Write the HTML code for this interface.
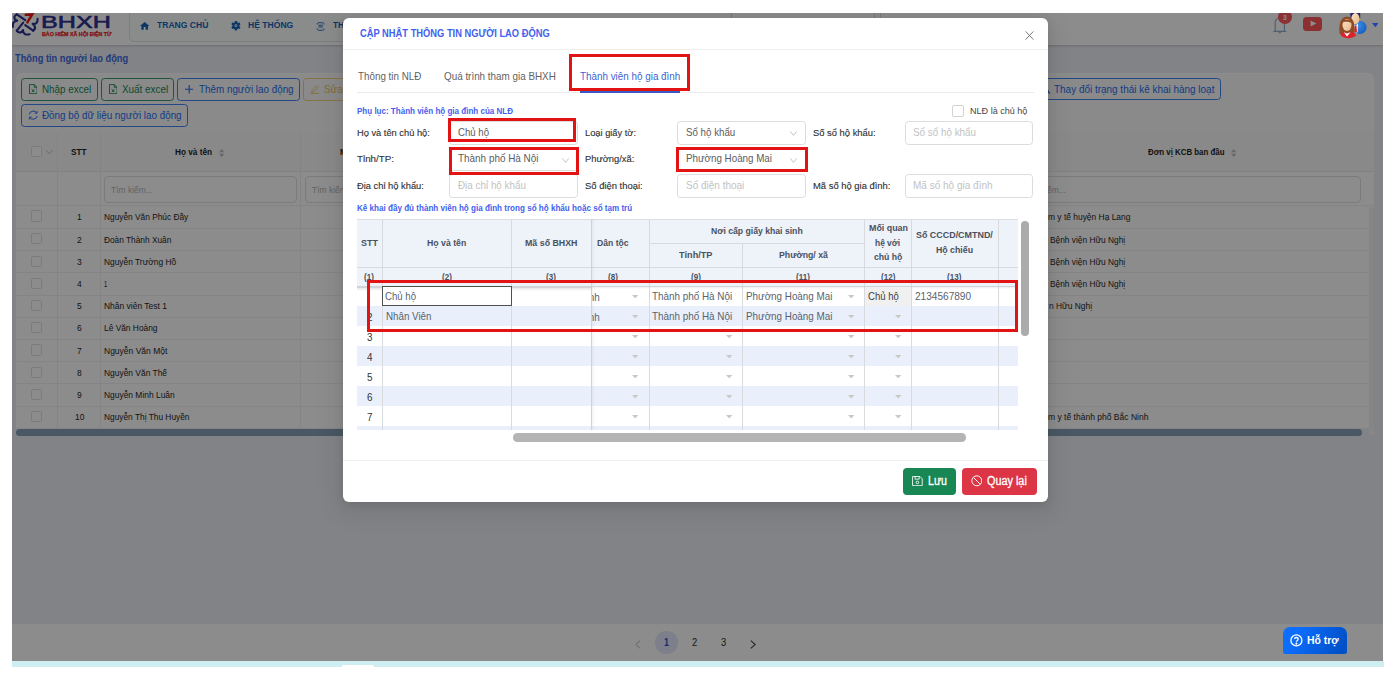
<!DOCTYPE html>
<html lang="vi"><head><meta charset="utf-8"><title>Thông tin người lao động</title>
<style>
html,body{margin:0;padding:0}
body{width:1397px;height:682px;background:#fff;position:relative;overflow:hidden;font-family:"Liberation Sans",Arial,sans-serif}
#shot{position:absolute;left:12px;top:13px;width:1371px;height:648px;overflow:hidden;background:#eceef5}
.lay{position:absolute;left:0;top:0;width:1397px;height:682px}
#bg,#fg{left:-12px;top:-13px}
#fgclip{position:absolute;left:12px;top:13px;width:1371px;height:648px;overflow:hidden}
.lay>div,.lay>svg{position:absolute;box-sizing:border-box}
#mask{position:absolute;left:0;top:0;right:0;bottom:0;background:rgba(0,0,0,.45)}
#cyan{position:absolute;left:12px;top:661px;width:1372px;height:6px;background:#cfeef2}
.t{position:absolute;white-space:nowrap;line-height:1;transform-origin:0 0}
.clip{overflow:hidden}
.clip>.t{position:absolute}
.t i.p{display:inline-block;width:0;height:0}
#notch{position:absolute;left:330px;top:4.4px;width:32.4px;height:1.6px;background:#fff;border-radius:1.5px 1.5px 0 0}

</style></head>
<body>
<div id="shot"><div class="lay" id="bg">
<div style="left:12.00px;top:13.00px;width:1371.00px;height:32.00px;background:#fff;box-shadow:0 1px 2px rgba(0,0,0,.18)"></div>
<div style="left:129.00px;top:11.00px;width:751.90px;height:31.20px;border:1px solid #dfe3e8;border-radius:0 0 0 5px;background:#fcfdfe"></div>
<div style="left:731.00px;top:13.00px;width:144.00px;height:23.00px;border:1px solid #d9d9d9;border-top:none;background:#fff"></div>
<svg style="left:11px;top:12px" width="29" height="25" viewBox="11 12 29 25" fill="none" stroke-linecap="round" stroke-linejoin="round">
<g stroke="#2e3192" stroke-width="2.1">
<path d="M16.8 14.4 L25.2 20.2"/>
<path d="M25.2 25.2 L33.2 30.6"/>
<path d="M23.2 22.6 L16.8 30.6"/>
<path d="M16.8 14.4 Q13.2 16.4 14.8 19 Q15.6 20.4 17.2 20.6 Q12.2 21 12.9 26.8"/>
<path d="M16.8 30.6 Q18.6 33.4 21.2 32 Q22.6 31.2 23 30 Q23 35.6 29.6 34.3"/>
<path d="M33.2 30.6 Q36 28.6 34.6 26 Q33.8 24.4 32.6 23.8 Q37.8 24.6 37.6 18.8"/>
</g>
<g stroke="#f01818" stroke-width="2.5" stroke-linejoin="miter"><path d="M27.4 22.4 L32.2 14.4 L25.8 14.8"/></g>
</svg>
<svg style="left:140.4px;top:22.2px" width="9.4" height="7.8" viewBox="0 0 24 20"><path fill="#1565b8" d="M12 0 L0 10 H3.5 V20 H9.5 V13 H14.5 V20 H20.5 V10 H24 Z"/></svg>
<svg style="left:230.8px;top:21.2px" width="9.8" height="9.4" viewBox="-12 -12 24 24"><g fill="#1565b8"><circle r="9"/>
<rect x="-3" y="-12" width="6" height="24" rx="1.2"/><rect x="-3" y="-12" width="6" height="24" rx="1.2" transform="rotate(60)"/><rect x="-3" y="-12" width="6" height="24" rx="1.2" transform="rotate(120)"/></g><circle r="3.6" fill="#fff"/><circle r="1.5" fill="#1565b8"/></svg>
<svg style="left:316px;top:21.5px" width="9.2" height="9" viewBox="0 0 18 18" fill="none" stroke="#1565b8" stroke-width="1.8"><path d="M2 5 C2 2.5 3.5 1.5 5.5 1.5 H12.5 C14.5 1.5 16 2.5 16 5"/><path d="M4.5 6.5 H13.5 M4.5 10 H13.5"/><path d="M2 13 C2 15.5 3.5 16.5 5.5 16.5 H12.5 C14.5 16.5 16 15.5 16 13"/></svg>
<svg style="left:1272px;top:14px" width="18" height="22" viewBox="1272 14 18 22" fill="none"><path d="M1275.2 31.2 V23.5 C1275.2 20 1277.2 18 1279.8 18 C1282.4 18 1284.4 20 1284.4 23.5 V31.2 M1273.4 31.4 H1286.2" stroke="#8fb0ca" stroke-width="1.2"/><path d="M1278 32.2 L1279.8 33.8 L1281.6 32.2 Z" fill="#8fb0ca"/></svg>
<div style="left:1277.60px;top:9.80px;width:14.20px;height:14.20px;background:#ff5a60;border-radius:50%"></div>
<div style="left:1303.00px;top:17.00px;width:19.40px;height:13.60px;background:#ff5658;border-radius:3.5px"></div>
<svg style="left:1309.6px;top:20.4px" width="7" height="7" viewBox="0 0 7 7"><path d="M0.6 0.4 L6.4 3.5 L0.6 6.6 Z" fill="#fff"/></svg>
<div style="left:16.00px;top:73.00px;width:1358.40px;height:60.00px;background:#fbfbfb;border-radius:6px 6px 0 0;border:1px solid #fff;border-bottom:none"></div>
<div style="left:21.20px;top:78.20px;width:76.50px;height:22.40px;border:1px solid #198754;border-radius:3.5px;opacity:.85;"></div>
<div style="left:101.00px;top:78.20px;width:73.00px;height:22.40px;border:1px solid #198754;border-radius:3.5px;opacity:.85;"></div>
<div style="left:177.30px;top:78.20px;width:122.70px;height:22.40px;border:1px solid #1d6ff0;border-radius:3.5px;opacity:.85;"></div>
<div style="left:303.20px;top:78.20px;width:48.80px;height:22.40px;border:1px solid #f0cc66;border-radius:3.5px;opacity:.85;"></div>
<div style="left:21.20px;top:104.30px;width:167.00px;height:22.50px;border:1px solid #1d6ff0;border-radius:3.5px;opacity:.85;"></div>
<div style="left:1036.00px;top:78.40px;width:185.30px;height:22.10px;border:1px solid #1d6ff0;border-radius:3.5px;opacity:.85;"></div>
<svg style="left:28.5px;top:84.1px" width="8.6" height="10.2" viewBox="0 0 17 20" fill="none" stroke="#198754" stroke-width="1.7"><path d="M1 1 H10.5 L16 6.5 V19 H1 Z"/><path d="M10.5 1 V6.5 H16"/><path d="M5.6 10.4 L10.6 16 M10.6 10.4 L5.6 16" stroke-width="1.9"/></svg>
<svg style="left:108.7px;top:84.1px" width="8.6" height="10.2" viewBox="0 0 17 20" fill="none" stroke="#198754" stroke-width="1.7"><path d="M1 1 H10.5 L16 6.5 V19 H1 Z"/><path d="M10.5 1 V6.5 H16"/><path d="M5.6 10.4 L10.6 16 M10.6 10.4 L5.6 16" stroke-width="1.9"/></svg>
<svg style="left:184.8px;top:85.2px" width="8.4" height="8.4" viewBox="0 0 8.4 8.4" stroke="#1d6ff0" stroke-width="1.1"><path d="M4.2 0 V8.4 M0 4.2 H8.4"/></svg>
<svg style="left:309.6px;top:84.4px" width="9.8" height="10" viewBox="0 0 20 20" fill="none" stroke="#ecc050" stroke-width="1.6"><path d="M4 13.5 L13.5 3 L17 6.5 L7.5 16 L3.4 16.6 Z"/><path d="M1 19 H19"/></svg>
<svg style="left:27.6px;top:110.4px" width="10.4" height="10.4" viewBox="0 0 20 20" fill="none" stroke="#1d6ff0" stroke-width="1.9"><path d="M2.4 8.2 A8 8 0 0 1 17 6"/><path d="M17.6 11.8 A8 8 0 0 1 3 14"/><path d="M17.4 1.6 V6.2 H12.8" stroke-width="1.6"/><path d="M2.6 18.4 V13.8 H7.2" stroke-width="1.6"/></svg>
<svg style="left:1040px;top:84px" width="11" height="11" viewBox="1040 84 11 11" fill="none" stroke="#1d6ff0" stroke-width="1.3"><path d="M1041 86 L1046.6 88.4 L1049.6 93.6"/></svg>
<div style="left:16.00px;top:132.60px;width:1358.40px;height:39.40px;background:#fafafa;border-bottom:1px solid #ededed"></div>
<div style="left:16.00px;top:172.00px;width:1358.40px;height:33.50px;background:#fff"></div>
<div style="left:16.00px;top:205.50px;width:1358.40px;height:223.10px;background:#fff"></div>
<div style="left:16.00px;top:205.00px;width:1358.40px;height:1.00px;background:#f1f1f1"></div>
<div style="left:16.00px;top:227.90px;width:1358.40px;height:1.00px;background:#f1f1f1"></div>
<div style="left:16.00px;top:250.12px;width:1358.40px;height:1.00px;background:#f1f1f1"></div>
<div style="left:16.00px;top:272.34px;width:1358.40px;height:1.00px;background:#f1f1f1"></div>
<div style="left:16.00px;top:294.56px;width:1358.40px;height:1.00px;background:#f1f1f1"></div>
<div style="left:16.00px;top:316.78px;width:1358.40px;height:1.00px;background:#f1f1f1"></div>
<div style="left:16.00px;top:339.00px;width:1358.40px;height:1.00px;background:#f1f1f1"></div>
<div style="left:16.00px;top:361.22px;width:1358.40px;height:1.00px;background:#f1f1f1"></div>
<div style="left:16.00px;top:383.44px;width:1358.40px;height:1.00px;background:#f1f1f1"></div>
<div style="left:16.00px;top:405.66px;width:1358.40px;height:1.00px;background:#f1f1f1"></div>
<div style="left:16.00px;top:427.88px;width:1358.40px;height:1.00px;background:#f1f1f1"></div>
<div style="left:57.30px;top:132.60px;width:1.00px;height:295.90px;background:#f0f0f0"></div>
<div style="left:100.30px;top:132.60px;width:1.00px;height:295.90px;background:#f0f0f0"></div>
<div style="left:300.10px;top:132.60px;width:1.00px;height:295.90px;background:#f0f0f0"></div>
<div style="left:31.10px;top:146.40px;width:11.00px;height:11.00px;border:1px solid #e0e0e0;border-radius:1.6px;background:#fff"></div>
<svg style="left:46.2px;top:150.4px" width="6.6" height="4.4" viewBox="0 0 6.6 4.4" fill="none" stroke="#b8b8b8" stroke-width="0.9"><path d="M0.4 0.5 L3.3 3.8 L6.2 0.5"/></svg>
<svg style="left:219.4px;top:147.6px" width="5.4" height="10" viewBox="0 0 5.4 10"><path d="M0 4.2 L2.7 1 L5.4 4.2Z M0 5.8 L2.7 9 L5.4 5.8Z" fill="#bdbdbd"/></svg>
<svg style="left:1231.2px;top:147.6px" width="5.4" height="10" viewBox="0 0 5.4 10"><path d="M0 4.2 L2.7 1 L5.4 4.2Z M0 5.8 L2.7 9 L5.4 5.8Z" fill="#bdbdbd"/></svg>
<div style="left:104.30px;top:176.40px;width:192.60px;height:26.30px;border:1px solid #e0e0e0;border-radius:4px;background:#fff"></div>
<div style="left:304.80px;top:176.40px;width:195.20px;height:26.30px;border:1px solid #e0e0e0;border-radius:4px;background:#fff"></div>
<div style="left:900.00px;top:176.40px;width:461.00px;height:26.30px;border:1px solid #e0e0e0;border-radius:4px;background:#fff"></div>
<div style="left:31.10px;top:210.40px;width:11.10px;height:11.20px;border:1px solid #e0e0e0;border-radius:1.6px;background:#fff"></div>
<div style="left:31.10px;top:233.30px;width:11.10px;height:11.20px;border:1px solid #e0e0e0;border-radius:1.6px;background:#fff"></div>
<div style="left:31.10px;top:255.52px;width:11.10px;height:11.20px;border:1px solid #e0e0e0;border-radius:1.6px;background:#fff"></div>
<div style="left:31.10px;top:277.74px;width:11.10px;height:11.20px;border:1px solid #e0e0e0;border-radius:1.6px;background:#fff"></div>
<div style="left:31.10px;top:299.96px;width:11.10px;height:11.20px;border:1px solid #e0e0e0;border-radius:1.6px;background:#fff"></div>
<div style="left:31.10px;top:322.18px;width:11.10px;height:11.20px;border:1px solid #e0e0e0;border-radius:1.6px;background:#fff"></div>
<div style="left:31.10px;top:344.40px;width:11.10px;height:11.20px;border:1px solid #e0e0e0;border-radius:1.6px;background:#fff"></div>
<div style="left:31.10px;top:366.62px;width:11.10px;height:11.20px;border:1px solid #e0e0e0;border-radius:1.6px;background:#fff"></div>
<div style="left:31.10px;top:388.84px;width:11.10px;height:11.20px;border:1px solid #e0e0e0;border-radius:1.6px;background:#fff"></div>
<div style="left:31.10px;top:411.06px;width:11.10px;height:11.20px;border:1px solid #e0e0e0;border-radius:1.6px;background:#fff"></div>
<div style="left:1369.00px;top:206.50px;width:5.40px;height:222.00px;background:#f3f3f3"></div>
<div style="left:1369.40px;top:429.40px;width:5.00px;height:5.20px;background:#f6f6f6"></div>
<div style="left:16.00px;top:428.80px;width:1346.40px;height:6.80px;background:#86a0b6;border-radius:3.5px"></div>
<div style="left:12.00px;top:624.00px;width:1371.00px;height:37.00px;background:#fff"></div>
<div style="left:655.30px;top:631.00px;width:22.60px;height:22.60px;background:#e3e9fb;border-radius:50%"></div>
<svg style="left:635px;top:639.6px" width="6" height="9" viewBox="0 0 6 9" fill="none" stroke="#b9b9b9" stroke-width="1"><path d="M5.2 0.6 L0.8 4.5 L5.2 8.4"/></svg>
<svg style="left:750px;top:639.6px" width="6" height="9" viewBox="0 0 6 9" fill="none" stroke="#4a4a4a" stroke-width="1.1"><path d="M0.8 0.6 L5.2 4.5 L0.8 8.4"/></svg>
<span class="t" style="top:15.30px;font-size:16.8px;font-weight:400;color:#2e3192;-webkit-text-stroke:0.55px #2e3192;left:41.20px;transform:scaleX(1.4971);">BHXH</span>
<span class="t" style="top:32.30px;font-size:5.6px;font-weight:700;color:#f01818;-webkit-text-stroke:0.25px #f01818;left:41.50px;transform:scaleX(0.9478);">BẢO HIỂM XÃ HỘI ĐIỆN TỬ</span>
<span class="t" style="top:21.10px;font-size:9.2px;font-weight:700;color:#1565b8;left:157.00px;transform:scaleX(0.9324);">TRANG CHỦ</span>
<span class="t" style="top:21.10px;font-size:9.2px;font-weight:700;color:#1565b8;left:247.70px;transform:scaleX(0.9340);">HỆ THỐNG</span>
<span class="t" style="top:21.10px;font-size:9.2px;font-weight:700;color:#1565b8;left:332.50px;transform:scaleX(0.8950);">THỦ TỤC</span>
<span class="t" style="top:13.60px;font-size:7.5px;font-weight:700;color:#fff;left:1282.83px;transform:scaleX(0.8950);">3</span>
<span class="t" style="top:52.50px;font-size:10.5px;font-weight:700;color:#3f6ae0;left:15.30px;transform:scaleX(0.8829);">Thông tin người lao động</span>
<span class="t" style="top:83.70px;font-size:10.5px;font-weight:400;color:#198754;left:41.70px;transform:scaleX(0.9366);">Nhập excel</span>
<span class="t" style="top:83.70px;font-size:10.5px;font-weight:400;color:#198754;left:121.50px;transform:scaleX(0.9423);">Xuất excel</span>
<span class="t" style="top:83.70px;font-size:10.5px;font-weight:400;color:#1d6ff0;left:198.80px;transform:scaleX(0.9376);">Thêm người lao động</span>
<span class="t" style="top:83.70px;font-size:10.5px;font-weight:400;color:#ecc050;left:323.70px;transform:scaleX(0.9400);">Sửa</span>
<span class="t" style="top:109.80px;font-size:10.5px;font-weight:400;color:#1d6ff0;left:41.70px;transform:scaleX(0.9382);">Đồng bộ dữ liệu người lao động</span>
<span class="t" style="top:83.70px;font-size:10.5px;font-weight:400;color:#1d6ff0;left:1054.30px;transform:scaleX(0.9475);">Thay đổi trạng thái kê khai hàng loạt</span>
<span class="t" style="top:148.00px;font-size:9px;font-weight:700;color:#1f1f1f;left:71.00px;transform:scaleX(0.9118);">STT</span>
<span class="t" style="top:148.00px;font-size:9px;font-weight:700;color:#1f1f1f;left:175.40px;transform:scaleX(0.9157);">Họ và tên</span>
<span class="t" style="top:148.00px;font-size:9px;font-weight:700;color:#1f1f1f;left:339.60px;transform:scaleX(0.8950);">Mã số BHXH</span>
<span class="t" style="top:148.00px;font-size:9px;font-weight:700;color:#1f1f1f;left:1148.00px;transform:scaleX(0.8752);">Đơn vị KCB ban đầu</span>
<span class="t" style="top:185.60px;font-size:9px;font-weight:400;color:#b5b5b5;left:111.00px;transform:scaleX(0.9400);">Tìm kiếm...</span>
<span class="t" style="top:185.60px;font-size:9px;font-weight:400;color:#b5b5b5;left:311.60px;transform:scaleX(0.9400);">Tìm kiếm...</span>
<span class="t" style="top:185.60px;font-size:9px;font-weight:400;color:#b5b5b5;left:1023.77px;transform:scaleX(0.9400);">Tìm kiếm...</span>
<span class="t" style="top:213.40px;font-size:9px;font-weight:400;color:#1f1f1f;left:76.94px;transform:scaleX(0.9400);">1</span>
<span class="t" style="top:213.40px;font-size:9px;font-weight:400;color:#1f1f1f;left:103.70px;transform:scaleX(0.9257);">Nguyễn Văn Phúc Đầy</span>
<span class="t" style="top:213.40px;font-size:9px;font-weight:400;color:#1f1f1f;left:1048.40px;transform:scaleX(0.9357);">m y tế huyện Hạ Lang</span>
<span class="t" style="top:235.60px;font-size:9px;font-weight:400;color:#1f1f1f;left:76.94px;transform:scaleX(0.9400);">2</span>
<span class="t" style="top:235.60px;font-size:9px;font-weight:400;color:#1f1f1f;left:103.70px;transform:scaleX(0.9231);">Đoàn Thành Xuân</span>
<span class="t" style="top:235.60px;font-size:9px;font-weight:400;color:#1f1f1f;left:1049.90px;transform:scaleX(0.9275);">Bệnh viện Hữu Nghị</span>
<span class="t" style="top:257.80px;font-size:9px;font-weight:400;color:#1f1f1f;left:76.94px;transform:scaleX(0.9400);">3</span>
<span class="t" style="top:257.80px;font-size:9px;font-weight:400;color:#1f1f1f;left:103.70px;transform:scaleX(0.9307);">Nguyễn Trường Hồ</span>
<span class="t" style="top:257.80px;font-size:9px;font-weight:400;color:#1f1f1f;left:1049.90px;transform:scaleX(0.9275);">Bệnh viện Hữu Nghị</span>
<span class="t" style="top:280.00px;font-size:9px;font-weight:400;color:#1f1f1f;left:76.94px;transform:scaleX(0.9400);">4</span>
<span class="t" style="top:280.00px;font-size:9px;font-weight:400;color:#1f1f1f;left:103.70px;transform:scaleX(0.6380);">1</span>
<span class="t" style="top:280.00px;font-size:9px;font-weight:400;color:#1f1f1f;left:1049.90px;transform:scaleX(0.9275);">Bệnh viện Hữu Nghị</span>
<span class="t" style="top:302.20px;font-size:9px;font-weight:400;color:#1f1f1f;left:76.94px;transform:scaleX(0.9400);">5</span>
<span class="t" style="top:302.20px;font-size:9px;font-weight:400;color:#1f1f1f;left:103.70px;transform:scaleX(0.9418);">Nhân viên Test 1</span>
<span class="t" style="top:302.20px;font-size:9px;font-weight:400;color:#1f1f1f;left:1048.60px;transform:scaleX(0.9338);">n Hữu Nghị</span>
<span class="t" style="top:324.40px;font-size:9px;font-weight:400;color:#1f1f1f;left:76.94px;transform:scaleX(0.9400);">6</span>
<span class="t" style="top:324.40px;font-size:9px;font-weight:400;color:#1f1f1f;left:103.70px;transform:scaleX(0.9297);">Lê Văn Hoàng</span>
<span class="t" style="top:346.60px;font-size:9px;font-weight:400;color:#1f1f1f;left:76.94px;transform:scaleX(0.9400);">7</span>
<span class="t" style="top:346.60px;font-size:9px;font-weight:400;color:#1f1f1f;left:103.70px;transform:scaleX(0.9441);">Nguyễn Văn Một</span>
<span class="t" style="top:368.80px;font-size:9px;font-weight:400;color:#1f1f1f;left:76.94px;transform:scaleX(0.9400);">8</span>
<span class="t" style="top:368.80px;font-size:9px;font-weight:400;color:#1f1f1f;left:103.70px;transform:scaleX(0.9348);">Nguyễn Văn Thế</span>
<span class="t" style="top:391.00px;font-size:9px;font-weight:400;color:#1f1f1f;left:76.94px;transform:scaleX(0.9400);">9</span>
<span class="t" style="top:391.00px;font-size:9px;font-weight:400;color:#1f1f1f;left:103.70px;transform:scaleX(0.9356);">Nguyễn Minh Luân</span>
<span class="t" style="top:413.20px;font-size:9px;font-weight:400;color:#1f1f1f;left:74.59px;transform:scaleX(0.9400);">10</span>
<span class="t" style="top:413.20px;font-size:9px;font-weight:400;color:#1f1f1f;left:103.70px;transform:scaleX(0.9270);">Nguyễn Thị Thu Huyền</span>
<span class="t" style="top:413.20px;font-size:9px;font-weight:400;color:#1f1f1f;left:1048.40px;transform:scaleX(0.9466);">m y tế thành phố Bắc Ninh</span>
<span class="t" style="top:637.80px;font-size:10px;font-weight:700;color:#2f52c8;left:664.11px;transform:scaleX(0.8950);">1</span>
<span class="t" style="top:637.80px;font-size:10px;font-weight:400;color:#2b2b2b;left:692.39px;transform:scaleX(0.9400);">2</span>
<span class="t" style="top:637.80px;font-size:10px;font-weight:400;color:#2b2b2b;left:721.09px;transform:scaleX(0.9400);">3</span>
</div><div id="mask"></div></div>
<div id="cyan"><div id="notch"></div></div>
<div id="fgclip"><div class="lay" id="fg">
<svg style="left:1338px;top:12px" width="30" height="28" viewBox="1338 12 30 28">
<defs><linearGradient id="sk" x1="0" y1="0" x2="1" y2="1"><stop offset="0" stop-color="#fbe3c8"/><stop offset="1" stop-color="#e8b88a"/></linearGradient>
<radialGradient id="su" cx=".35" cy=".35" r=".8"><stop offset="0" stop-color="#3f8fe6"/><stop offset="1" stop-color="#1258b8"/></radialGradient></defs>
<ellipse cx="1360" cy="27.4" rx="6.6" ry="6.5" fill="url(#su)"/>
<path d="M1350.4 13 h9.8 v5.4 h-9.8z" fill="#23246b"/>
<ellipse cx="1355.4" cy="18.6" rx="4.1" ry="5.6" fill="url(#sk)"/>
<path d="M1353.2 23.6 l2.4 2 l2.4 -2 l-0.4 9 h-4z" fill="#f4f6fb"/>
<path d="M1354.8 25.4 h1.6 l0.6 6 l-1.4 1.6 l-1.4 -1.6z" fill="#d41f27"/>
<path d="M1339.6 34 C1338.6 24.6 1340.4 16.8 1347 16.8 C1353.6 16.8 1355.4 24.6 1354.4 34 Z" fill="#8e4b25"/>
<ellipse cx="1347" cy="25" rx="4.5" ry="6" fill="url(#sk)"/>
<path d="M1341.6 22.8 C1342.4 18.4 1351.4 18 1352.6 23.2 C1349.6 21.4 1344.6 21 1341.6 22.8Z" fill="#8e4b25"/>
<path d="M1340.6 35 C1341.4 32 1344 31.6 1347 33.4 C1350 31.6 1353.4 32 1356.2 35 C1353.6 39.2 1343.2 39.2 1340.6 35Z" fill="#e0202a"/>
<path d="M1343.8 32.2 L1347 36.4 L1350.6 32.2 L1347 33.6Z" fill="#fff"/>
</svg>
<svg style="left:1371.6px;top:22.8px" width="6.6" height="4.2" viewBox="0 0 6.6 4.2"><path d="M0 0 H6.6 L3.3 4.2Z" fill="#1f3fb5"/></svg>
<div style="left:343.00px;top:18.00px;width:705.00px;height:484.40px;background:#fff;border-radius:6px;box-shadow:0 3px 10px rgba(0,0,0,.10),0 7px 24px 6px rgba(0,0,0,.07)"></div>
<div style="left:343.00px;top:49.00px;width:705.00px;height:1.00px;background:#efefef"></div>
<svg style="left:1025.4px;top:31px" width="9" height="9" viewBox="0 0 9 9" fill="none" stroke="#6b6b6b" stroke-width="0.9"><path d="M0.6 0.4 L8.4 8.6 M8.4 0.4 L0.6 8.6"/></svg>
<div style="left:357.20px;top:92.00px;width:676.50px;height:0.80px;background:#ebebeb"></div>
<div style="left:579.90px;top:90.80px;width:100.30px;height:2.10px;background:#3a5bc7"></div>
<div style="left:952.30px;top:105.20px;width:11.60px;height:11.40px;border:1px solid #d2d2d2;border-radius:2px;background:#fff"></div>
<div style="left:449.00px;top:120.80px;width:128.90px;height:24.10px;border:1px solid #dcdcdc;border-radius:3.5px;background:#fff"></div>
<div style="left:676.50px;top:120.80px;width:129.40px;height:24.10px;border:1px solid #dcdcdc;border-radius:3.5px;background:#fff"></div>
<div style="left:904.80px;top:120.80px;width:128.40px;height:24.10px;border:1px solid #dcdcdc;border-radius:3.5px;background:#fff"></div>
<div style="left:449.00px;top:147.40px;width:128.90px;height:24.10px;border:1px solid #dcdcdc;border-radius:3.5px;background:#fff"></div>
<div style="left:676.50px;top:147.40px;width:129.40px;height:24.10px;border:1px solid #dcdcdc;border-radius:3.5px;background:#fff"></div>
<div style="left:449.00px;top:174.40px;width:128.90px;height:23.60px;border:1px solid #dcdcdc;border-radius:3.5px;background:#fff"></div>
<div style="left:676.50px;top:174.40px;width:129.40px;height:23.60px;border:1px solid #dcdcdc;border-radius:3.5px;background:#fff"></div>
<div style="left:904.80px;top:174.40px;width:128.40px;height:23.60px;border:1px solid #dcdcdc;border-radius:3.5px;background:#fff"></div>
<svg style="left:561.8px;top:158.2px" width="7" height="5" viewBox="0 0 7 5" fill="none" stroke="#bdbdbd" stroke-width="0.9"><path d="M0.3 0.4 L3.5 4.4 L6.7 0.4"/></svg>
<svg style="left:789.9px;top:131.2px" width="7" height="5" viewBox="0 0 7 5" fill="none" stroke="#bdbdbd" stroke-width="0.9"><path d="M0.3 0.4 L3.5 4.4 L6.7 0.4"/></svg>
<svg style="left:789.9px;top:157.8px" width="7" height="5" viewBox="0 0 7 5" fill="none" stroke="#bdbdbd" stroke-width="0.9"><path d="M0.3 0.4 L3.5 4.4 L6.7 0.4"/></svg>
<div style="left:357.30px;top:219.20px;width:660.50px;height:67.20px;background:#eef2f9"></div>
<div style="left:357.30px;top:286.00px;width:660.50px;height:20.07px;background:#fff"></div>
<div style="left:357.30px;top:306.07px;width:660.50px;height:20.07px;background:#e9effb"></div>
<div style="left:357.30px;top:326.14px;width:660.50px;height:20.07px;background:#fff"></div>
<div style="left:357.30px;top:346.21px;width:660.50px;height:20.07px;background:#e9effb"></div>
<div style="left:357.30px;top:366.28px;width:660.50px;height:20.07px;background:#fff"></div>
<div style="left:357.30px;top:386.35px;width:660.50px;height:20.07px;background:#e9effb"></div>
<div style="left:357.30px;top:406.42px;width:660.50px;height:20.07px;background:#fff"></div>
<div style="left:357.30px;top:426.49px;width:660.50px;height:3.81px;background:#e9effb"></div>
<div style="left:357.30px;top:219.20px;width:660.50px;height:0.90px;background:#dadde3"></div>
<div class="clip" style="left:591.2px;top:286.4px;width:30px;height:20px"><span class="t" style="left:-11.5px;top:5.5px;font-size:10.5px;color:#59626e;transform:scaleX(.94)">Kinh</span></div>
<div class="clip" style="left:591.2px;top:306.4px;width:30px;height:20px"><span class="t" style="left:-11.5px;top:5.5px;font-size:10.5px;color:#59626e;transform:scaleX(.94)">Kinh</span></div>
<div style="left:381.50px;top:219.20px;width:1.00px;height:211.10px;background:#d8dade"></div>
<div style="left:510.90px;top:219.20px;width:1.00px;height:211.10px;background:#d8dade"></div>
<div style="left:648.70px;top:219.20px;width:1.00px;height:211.10px;background:#d8dade"></div>
<div style="left:864.00px;top:219.20px;width:1.00px;height:211.10px;background:#d8dade"></div>
<div style="left:910.80px;top:219.20px;width:1.00px;height:211.10px;background:#d8dade"></div>
<div style="left:997.50px;top:219.20px;width:1.00px;height:211.10px;background:#d8dade"></div>
<div style="left:741.70px;top:243.40px;width:1.00px;height:186.90px;background:#d8dade"></div>
<div style="left:649.20px;top:243.00px;width:215.30px;height:0.90px;background:#d8dade"></div>
<div style="left:357.30px;top:267.00px;width:660.50px;height:0.90px;background:#d8dade"></div>
<div style="left:590.80px;top:219.20px;width:5.70px;height:211.10px;background:linear-gradient(90deg,rgba(0,0,0,.07),rgba(0,0,0,.02) 50%,rgba(0,0,0,0))"></div>
<div style="left:590.60px;top:219.20px;width:1.00px;height:211.10px;background:#cfd1d6"></div>
<div style="left:357.30px;top:286.40px;width:233.50px;height:5.10px;background:linear-gradient(rgba(0,0,0,.30),rgba(0,0,0,.08) 50%,rgba(0,0,0,0))"></div>
<div style="left:590.80px;top:286.40px;width:427.00px;height:2.60px;background:linear-gradient(rgba(0,0,0,.10),rgba(0,0,0,0))"></div>
<div style="left:357.30px;top:286.00px;width:660.50px;height:0.80px;background:#cfd3da"></div>
<div style="left:865.00px;top:287.00px;width:45.80px;height:19.20px;background:#f0f0f0"></div>
<div style="left:381.60px;top:286.20px;width:130.40px;height:20.00px;border:1.3px solid #505050;background:#fff"></div>
<svg style="left:632.3px;top:294.8px" width="6.4" height="3.4" viewBox="0 0 6.4 3.4"><path d="M0 0 H6.4 L3.2 3.4Z" fill="#c8c8c8"/></svg>
<svg style="left:848.1px;top:294.8px" width="6.4" height="3.4" viewBox="0 0 6.4 3.4"><path d="M0 0 H6.4 L3.2 3.4Z" fill="#c8c8c8"/></svg>
<svg style="left:632.3px;top:314.9px" width="6.4" height="3.4" viewBox="0 0 6.4 3.4"><path d="M0 0 H6.4 L3.2 3.4Z" fill="#c8c8c8"/></svg>
<svg style="left:848.1px;top:314.9px" width="6.4" height="3.4" viewBox="0 0 6.4 3.4"><path d="M0 0 H6.4 L3.2 3.4Z" fill="#c8c8c8"/></svg>
<svg style="left:895.2px;top:314.9px" width="6.4" height="3.4" viewBox="0 0 6.4 3.4"><path d="M0 0 H6.4 L3.2 3.4Z" fill="#c8c8c8"/></svg>
<svg style="left:632.3px;top:334.9px" width="6.4" height="3.4" viewBox="0 0 6.4 3.4"><path d="M0 0 H6.4 L3.2 3.4Z" fill="#c8c8c8"/></svg>
<svg style="left:726.2px;top:334.9px" width="6.4" height="3.4" viewBox="0 0 6.4 3.4"><path d="M0 0 H6.4 L3.2 3.4Z" fill="#c8c8c8"/></svg>
<svg style="left:848.1px;top:334.9px" width="6.4" height="3.4" viewBox="0 0 6.4 3.4"><path d="M0 0 H6.4 L3.2 3.4Z" fill="#c8c8c8"/></svg>
<svg style="left:895.2px;top:334.9px" width="6.4" height="3.4" viewBox="0 0 6.4 3.4"><path d="M0 0 H6.4 L3.2 3.4Z" fill="#c8c8c8"/></svg>
<svg style="left:632.3px;top:355.0px" width="6.4" height="3.4" viewBox="0 0 6.4 3.4"><path d="M0 0 H6.4 L3.2 3.4Z" fill="#c8c8c8"/></svg>
<svg style="left:726.2px;top:355.0px" width="6.4" height="3.4" viewBox="0 0 6.4 3.4"><path d="M0 0 H6.4 L3.2 3.4Z" fill="#c8c8c8"/></svg>
<svg style="left:848.1px;top:355.0px" width="6.4" height="3.4" viewBox="0 0 6.4 3.4"><path d="M0 0 H6.4 L3.2 3.4Z" fill="#c8c8c8"/></svg>
<svg style="left:895.2px;top:355.0px" width="6.4" height="3.4" viewBox="0 0 6.4 3.4"><path d="M0 0 H6.4 L3.2 3.4Z" fill="#c8c8c8"/></svg>
<svg style="left:632.3px;top:375.1px" width="6.4" height="3.4" viewBox="0 0 6.4 3.4"><path d="M0 0 H6.4 L3.2 3.4Z" fill="#c8c8c8"/></svg>
<svg style="left:726.2px;top:375.1px" width="6.4" height="3.4" viewBox="0 0 6.4 3.4"><path d="M0 0 H6.4 L3.2 3.4Z" fill="#c8c8c8"/></svg>
<svg style="left:848.1px;top:375.1px" width="6.4" height="3.4" viewBox="0 0 6.4 3.4"><path d="M0 0 H6.4 L3.2 3.4Z" fill="#c8c8c8"/></svg>
<svg style="left:895.2px;top:375.1px" width="6.4" height="3.4" viewBox="0 0 6.4 3.4"><path d="M0 0 H6.4 L3.2 3.4Z" fill="#c8c8c8"/></svg>
<svg style="left:632.3px;top:395.2px" width="6.4" height="3.4" viewBox="0 0 6.4 3.4"><path d="M0 0 H6.4 L3.2 3.4Z" fill="#c8c8c8"/></svg>
<svg style="left:726.2px;top:395.2px" width="6.4" height="3.4" viewBox="0 0 6.4 3.4"><path d="M0 0 H6.4 L3.2 3.4Z" fill="#c8c8c8"/></svg>
<svg style="left:848.1px;top:395.2px" width="6.4" height="3.4" viewBox="0 0 6.4 3.4"><path d="M0 0 H6.4 L3.2 3.4Z" fill="#c8c8c8"/></svg>
<svg style="left:895.2px;top:395.2px" width="6.4" height="3.4" viewBox="0 0 6.4 3.4"><path d="M0 0 H6.4 L3.2 3.4Z" fill="#c8c8c8"/></svg>
<svg style="left:632.3px;top:415.2px" width="6.4" height="3.4" viewBox="0 0 6.4 3.4"><path d="M0 0 H6.4 L3.2 3.4Z" fill="#c8c8c8"/></svg>
<svg style="left:726.2px;top:415.2px" width="6.4" height="3.4" viewBox="0 0 6.4 3.4"><path d="M0 0 H6.4 L3.2 3.4Z" fill="#c8c8c8"/></svg>
<svg style="left:848.1px;top:415.2px" width="6.4" height="3.4" viewBox="0 0 6.4 3.4"><path d="M0 0 H6.4 L3.2 3.4Z" fill="#c8c8c8"/></svg>
<svg style="left:895.2px;top:415.2px" width="6.4" height="3.4" viewBox="0 0 6.4 3.4"><path d="M0 0 H6.4 L3.2 3.4Z" fill="#c8c8c8"/></svg>
<div style="left:1020.80px;top:221.20px;width:8.60px;height:114.80px;background:#ababab;border-radius:4.3px"></div>
<div style="left:512.80px;top:433.20px;width:453.20px;height:8.60px;background:#b4b4b4;border-radius:4.3px"></div>
<div style="left:343.00px;top:460.00px;width:705.00px;height:1.00px;background:#efefef"></div>
<div style="left:902.80px;top:467.90px;width:53.10px;height:27.10px;background:#198754;border-radius:4px"></div>
<div style="left:961.80px;top:467.90px;width:74.80px;height:27.10px;background:#dc3545;border-radius:4px"></div>
<svg style="left:912.2px;top:475.8px" width="10.8" height="10.2" viewBox="0 0 21 20" fill="none" stroke="#fff" stroke-width="1.7"><path d="M1 1 H15.5 L20 5.5 V19 H1 Z"/><path d="M6 1 V6.2 H14 V1"/><circle cx="10.5" cy="12.6" r="2.6"/></svg>
<svg style="left:970.8px;top:475.2px" width="11.6" height="11.6" viewBox="0 0 20 20" fill="none" stroke="#fff" stroke-width="1.7"><circle cx="10" cy="10" r="8.6"/><path d="M4 4 L16 16"/></svg>
<div style="left:569.20px;top:54.20px;width:120.90px;height:37.00px;border:3.3px solid #e41313;z-index:5"></div>
<div style="left:448.20px;top:118.10px;width:127.70px;height:24.40px;border:3.3px solid #e41313;z-index:5"></div>
<div style="left:449.00px;top:147.20px;width:130.20px;height:28.30px;border:3.3px solid #e41313;z-index:5"></div>
<div style="left:676.00px;top:146.80px;width:131.70px;height:24.90px;border:3.3px solid #e41313;z-index:5"></div>
<div style="left:367.20px;top:279.50px;width:651.00px;height:52.80px;border:3.3px solid #e41313;z-index:5"></div>
<div style="left:1282.70px;top:626.60px;width:63.90px;height:27.60px;background:linear-gradient(120deg,#0d6efd 20%,#0050c8 90%);border-radius:7px 7px 2.5px 2.5px"></div>
<svg style="left:1289.8px;top:634.2px" width="12.8" height="12.8" viewBox="0 0 20 20" fill="none" stroke="#fff" stroke-width="2"><circle cx="10" cy="10" r="8.6"/><path d="M7.2 8 C7.2 4.6 12.8 4.6 12.8 8 C12.8 10 10 10 10 12.2" stroke-width="2"/><circle cx="10" cy="15" r="0.7" fill="#fff"/></svg>
<span class="t" style="top:27.70px;font-size:10.5px;font-weight:700;color:#4361ee;left:360.00px;transform:scaleX(0.8886);">CẬP NHẬT THÔNG TIN NGƯỜI LAO ĐỘNG</span>
<span class="t" style="top:71.00px;font-size:10.5px;font-weight:400;color:#626262;left:357.50px;transform:scaleX(0.9350);">Thông tin NLĐ</span>
<span class="t" style="top:71.00px;font-size:10.5px;font-weight:400;color:#626262;left:444.30px;transform:scaleX(0.9390);">Quá trình tham gia BHXH</span>
<span class="t" style="top:71.00px;font-size:10.5px;font-weight:400;color:#3d63d2;left:579.90px;transform:scaleX(0.9388);">Thành viên hộ gia đình</span>
<span class="t" style="top:106.60px;font-size:9px;font-weight:700;color:#4361ee;left:357.20px;transform:scaleX(0.8913);">Phụ lục: Thành viên hộ gia đình của NLĐ</span>
<span class="t" style="top:106.40px;font-size:9.75px;font-weight:400;color:#454545;left:969.70px;transform:scaleX(0.9288);">NLĐ là chủ hộ</span>
<span class="t" style="top:127.70px;font-size:9.75px;font-weight:400;color:#303030;-webkit-text-stroke:0.12px #303030;left:357.20px;transform:scaleX(0.9524);">Họ và tên chủ hộ:</span>
<span class="t" style="top:154.40px;font-size:9.75px;font-weight:400;color:#303030;-webkit-text-stroke:0.12px #303030;left:357.20px;transform:scaleX(1.0042);">Tỉnh/TP:</span>
<span class="t" style="top:180.80px;font-size:9.75px;font-weight:400;color:#303030;-webkit-text-stroke:0.12px #303030;left:357.20px;transform:scaleX(0.9568);">Địa chỉ hộ khẩu:</span>
<span class="t" style="top:127.70px;font-size:9.75px;font-weight:400;color:#303030;-webkit-text-stroke:0.12px #303030;left:585.30px;transform:scaleX(0.9522);">Loại giấy tờ:</span>
<span class="t" style="top:154.40px;font-size:9.75px;font-weight:400;color:#303030;-webkit-text-stroke:0.12px #303030;left:585.30px;transform:scaleX(0.9587);">Phường/xã:</span>
<span class="t" style="top:180.80px;font-size:9.75px;font-weight:400;color:#303030;-webkit-text-stroke:0.12px #303030;left:585.30px;transform:scaleX(0.9675);">Số điện thoại:</span>
<span class="t" style="top:127.70px;font-size:9.75px;font-weight:400;color:#303030;-webkit-text-stroke:0.12px #303030;left:812.60px;transform:scaleX(0.9624);">Số sổ hộ khẩu:</span>
<span class="t" style="top:180.80px;font-size:9.75px;font-weight:400;color:#303030;-webkit-text-stroke:0.12px #303030;left:812.60px;transform:scaleX(0.9649);">Mã số hộ gia đình:</span>
<span class="t" style="top:126.70px;font-size:10.5px;font-weight:400;color:#5c5c5c;left:457.80px;transform:scaleX(0.9156);">Chủ hộ</span>
<span class="t" style="top:153.40px;font-size:10.5px;font-weight:400;color:#5c5c5c;left:457.80px;transform:scaleX(0.9445);">Thành phố Hà Nội</span>
<span class="t" style="top:179.80px;font-size:10.5px;font-weight:400;color:#c2c2c2;left:457.80px;transform:scaleX(0.9393);">Địa chỉ hộ khẩu</span>
<span class="t" style="top:126.70px;font-size:10.5px;font-weight:400;color:#5c5c5c;left:685.60px;transform:scaleX(0.9277);">Sổ hộ khẩu</span>
<span class="t" style="top:153.40px;font-size:10.5px;font-weight:400;color:#5c5c5c;left:685.60px;transform:scaleX(0.9334);">Phường Hoàng Mai</span>
<span class="t" style="top:179.80px;font-size:10.5px;font-weight:400;color:#c2c2c2;left:685.60px;transform:scaleX(0.9509);">Số điện thoại</span>
<span class="t" style="top:126.70px;font-size:10.5px;font-weight:400;color:#c2c2c2;left:913.00px;transform:scaleX(0.9383);">Số sổ hộ khẩu</span>
<span class="t" style="top:179.80px;font-size:10.5px;font-weight:400;color:#c2c2c2;left:913.00px;transform:scaleX(0.9535);">Mã số hộ gia đình</span>
<span class="t" style="top:203.80px;font-size:9px;font-weight:700;color:#4361ee;left:357.20px;transform:scaleX(0.8978);">Kê khai đầy đủ thành viên hộ gia đình trong sổ hộ khẩu hoặc sổ tạm trú</span>
<span class="t" style="top:238.90px;font-size:9px;font-weight:700;color:#48515e;left:360.80px;transform:scaleX(0.9941);">STT</span>
<span class="t" style="top:238.90px;font-size:9px;font-weight:700;color:#48515e;left:426.80px;transform:scaleX(0.9700);">Họ và tên</span>
<span class="t" style="top:238.90px;font-size:9px;font-weight:700;color:#48515e;left:524.70px;transform:scaleX(0.9810);">Mã số BHXH</span>
<span class="t" style="top:238.90px;font-size:9px;font-weight:700;color:#48515e;left:597.00px;transform:scaleX(0.9571);">Dân tộc</span>
<span class="t" style="top:226.70px;font-size:9px;font-weight:700;color:#48515e;left:710.60px;transform:scaleX(0.9608);">Nơi cấp giấy khai sinh</span>
<span class="t" style="top:250.80px;font-size:9px;font-weight:700;color:#48515e;left:678.90px;transform:scaleX(1.0121);">Tỉnh/TP</span>
<span class="t" style="top:250.80px;font-size:9px;font-weight:700;color:#48515e;left:779.10px;transform:scaleX(0.9695);">Phường/ xã</span>
<span class="t" style="top:224.10px;font-size:9px;font-weight:700;color:#48515e;left:868.50px;transform:scaleX(0.9848);">Mối quan</span>
<span class="t" style="top:238.70px;font-size:9px;font-weight:700;color:#48515e;left:875.00px;transform:scaleX(0.9323);">hệ với</span>
<span class="t" style="top:253.40px;font-size:9px;font-weight:700;color:#48515e;left:873.70px;transform:scaleX(0.9627);">chủ hộ</span>
<span class="t" style="top:231.40px;font-size:9px;font-weight:700;color:#48515e;left:915.70px;transform:scaleX(0.9910);">Số CCCD/CMTND/</span>
<span class="t" style="top:245.90px;font-size:9px;font-weight:700;color:#48515e;left:936.00px;transform:scaleX(0.9733);">Hộ chiếu</span>
<span class="t" style="top:273.20px;font-size:9px;font-weight:700;color:#48515e;left:364.38px;transform:scaleX(0.8950);">(1)</span>
<span class="t" style="top:273.20px;font-size:9px;font-weight:700;color:#48515e;left:441.68px;transform:scaleX(0.8950);">(2)</span>
<span class="t" style="top:273.20px;font-size:9px;font-weight:700;color:#48515e;left:546.08px;transform:scaleX(0.8950);">(3)</span>
<span class="t" style="top:273.20px;font-size:9px;font-weight:700;color:#48515e;left:607.58px;transform:scaleX(0.8950);">(8)</span>
<span class="t" style="top:273.20px;font-size:9px;font-weight:700;color:#48515e;left:690.58px;transform:scaleX(0.8950);">(9)</span>
<span class="t" style="top:273.20px;font-size:9px;font-weight:700;color:#48515e;left:796.36px;transform:scaleX(0.8950);">(11)</span>
<span class="t" style="top:273.20px;font-size:9px;font-weight:700;color:#48515e;left:880.83px;transform:scaleX(0.8950);">(12)</span>
<span class="t" style="top:273.20px;font-size:9px;font-weight:700;color:#48515e;left:947.33px;transform:scaleX(0.8950);">(13)</span>
<span class="t" style="top:291.20px;font-size:10.5px;font-weight:400;color:#59626e;left:385.40px;transform:scaleX(0.9156);">Chủ hộ</span>
<span class="t" style="top:311.40px;font-size:10.5px;font-weight:400;color:#59626e;left:385.60px;transform:scaleX(0.9312);">Nhân Viên</span>
<span class="t" style="top:291.20px;font-size:10.5px;font-weight:400;color:#59626e;left:652.10px;transform:scaleX(0.9409);">Thành phố Hà Nội</span>
<span class="t" style="top:291.20px;font-size:10.5px;font-weight:400;color:#59626e;left:745.50px;transform:scaleX(0.9377);">Phường Hoàng Mai</span>
<span class="t" style="top:311.20px;font-size:10.5px;font-weight:400;color:#59626e;left:652.10px;transform:scaleX(0.9409);">Thành phố Hà Nội</span>
<span class="t" style="top:311.20px;font-size:10.5px;font-weight:400;color:#59626e;left:745.50px;transform:scaleX(0.9377);">Phường Hoàng Mai</span>
<span class="t" style="top:291.20px;font-size:10.5px;font-weight:400;color:#3c3c3c;left:868.20px;transform:scaleX(0.9096);">Chủ hộ</span>
<span class="t" style="top:291.20px;font-size:10.5px;font-weight:400;color:#59626e;left:914.60px;transform:scaleX(0.9605);">2134567890</span>
<span class="t" style="top:312.00px;font-size:10.5px;font-weight:400;color:#333;left:366.95px;transform:scaleX(0.9400);">2</span>
<span class="t" style="top:332.00px;font-size:10.5px;font-weight:400;color:#333;left:366.95px;transform:scaleX(0.9400);">3</span>
<span class="t" style="top:352.00px;font-size:10.5px;font-weight:400;color:#333;left:366.95px;transform:scaleX(0.9400);">4</span>
<span class="t" style="top:372.00px;font-size:10.5px;font-weight:400;color:#333;left:366.95px;transform:scaleX(0.9400);">5</span>
<span class="t" style="top:392.00px;font-size:10.5px;font-weight:400;color:#333;left:366.95px;transform:scaleX(0.9400);">6</span>
<span class="t" style="top:412.00px;font-size:10.5px;font-weight:400;color:#333;left:366.95px;transform:scaleX(0.9400);">7</span>
<span class="t" style="top:475.20px;font-size:12px;font-weight:400;color:#fff;-webkit-text-stroke:0.3px #fff;left:927.50px;transform:scaleX(0.8836);">Lưu</span>
<span class="t" style="top:475.20px;font-size:12px;font-weight:400;color:#fff;-webkit-text-stroke:0.3px #fff;left:986.60px;transform:scaleX(0.9039);">Quay lại</span>
<span class="t" style="top:635.10px;font-size:11.2px;font-weight:700;color:#fff;left:1307.40px;transform:scaleX(0.9336);">Hỗ trợ</span>
</div></div>
</body></html>
